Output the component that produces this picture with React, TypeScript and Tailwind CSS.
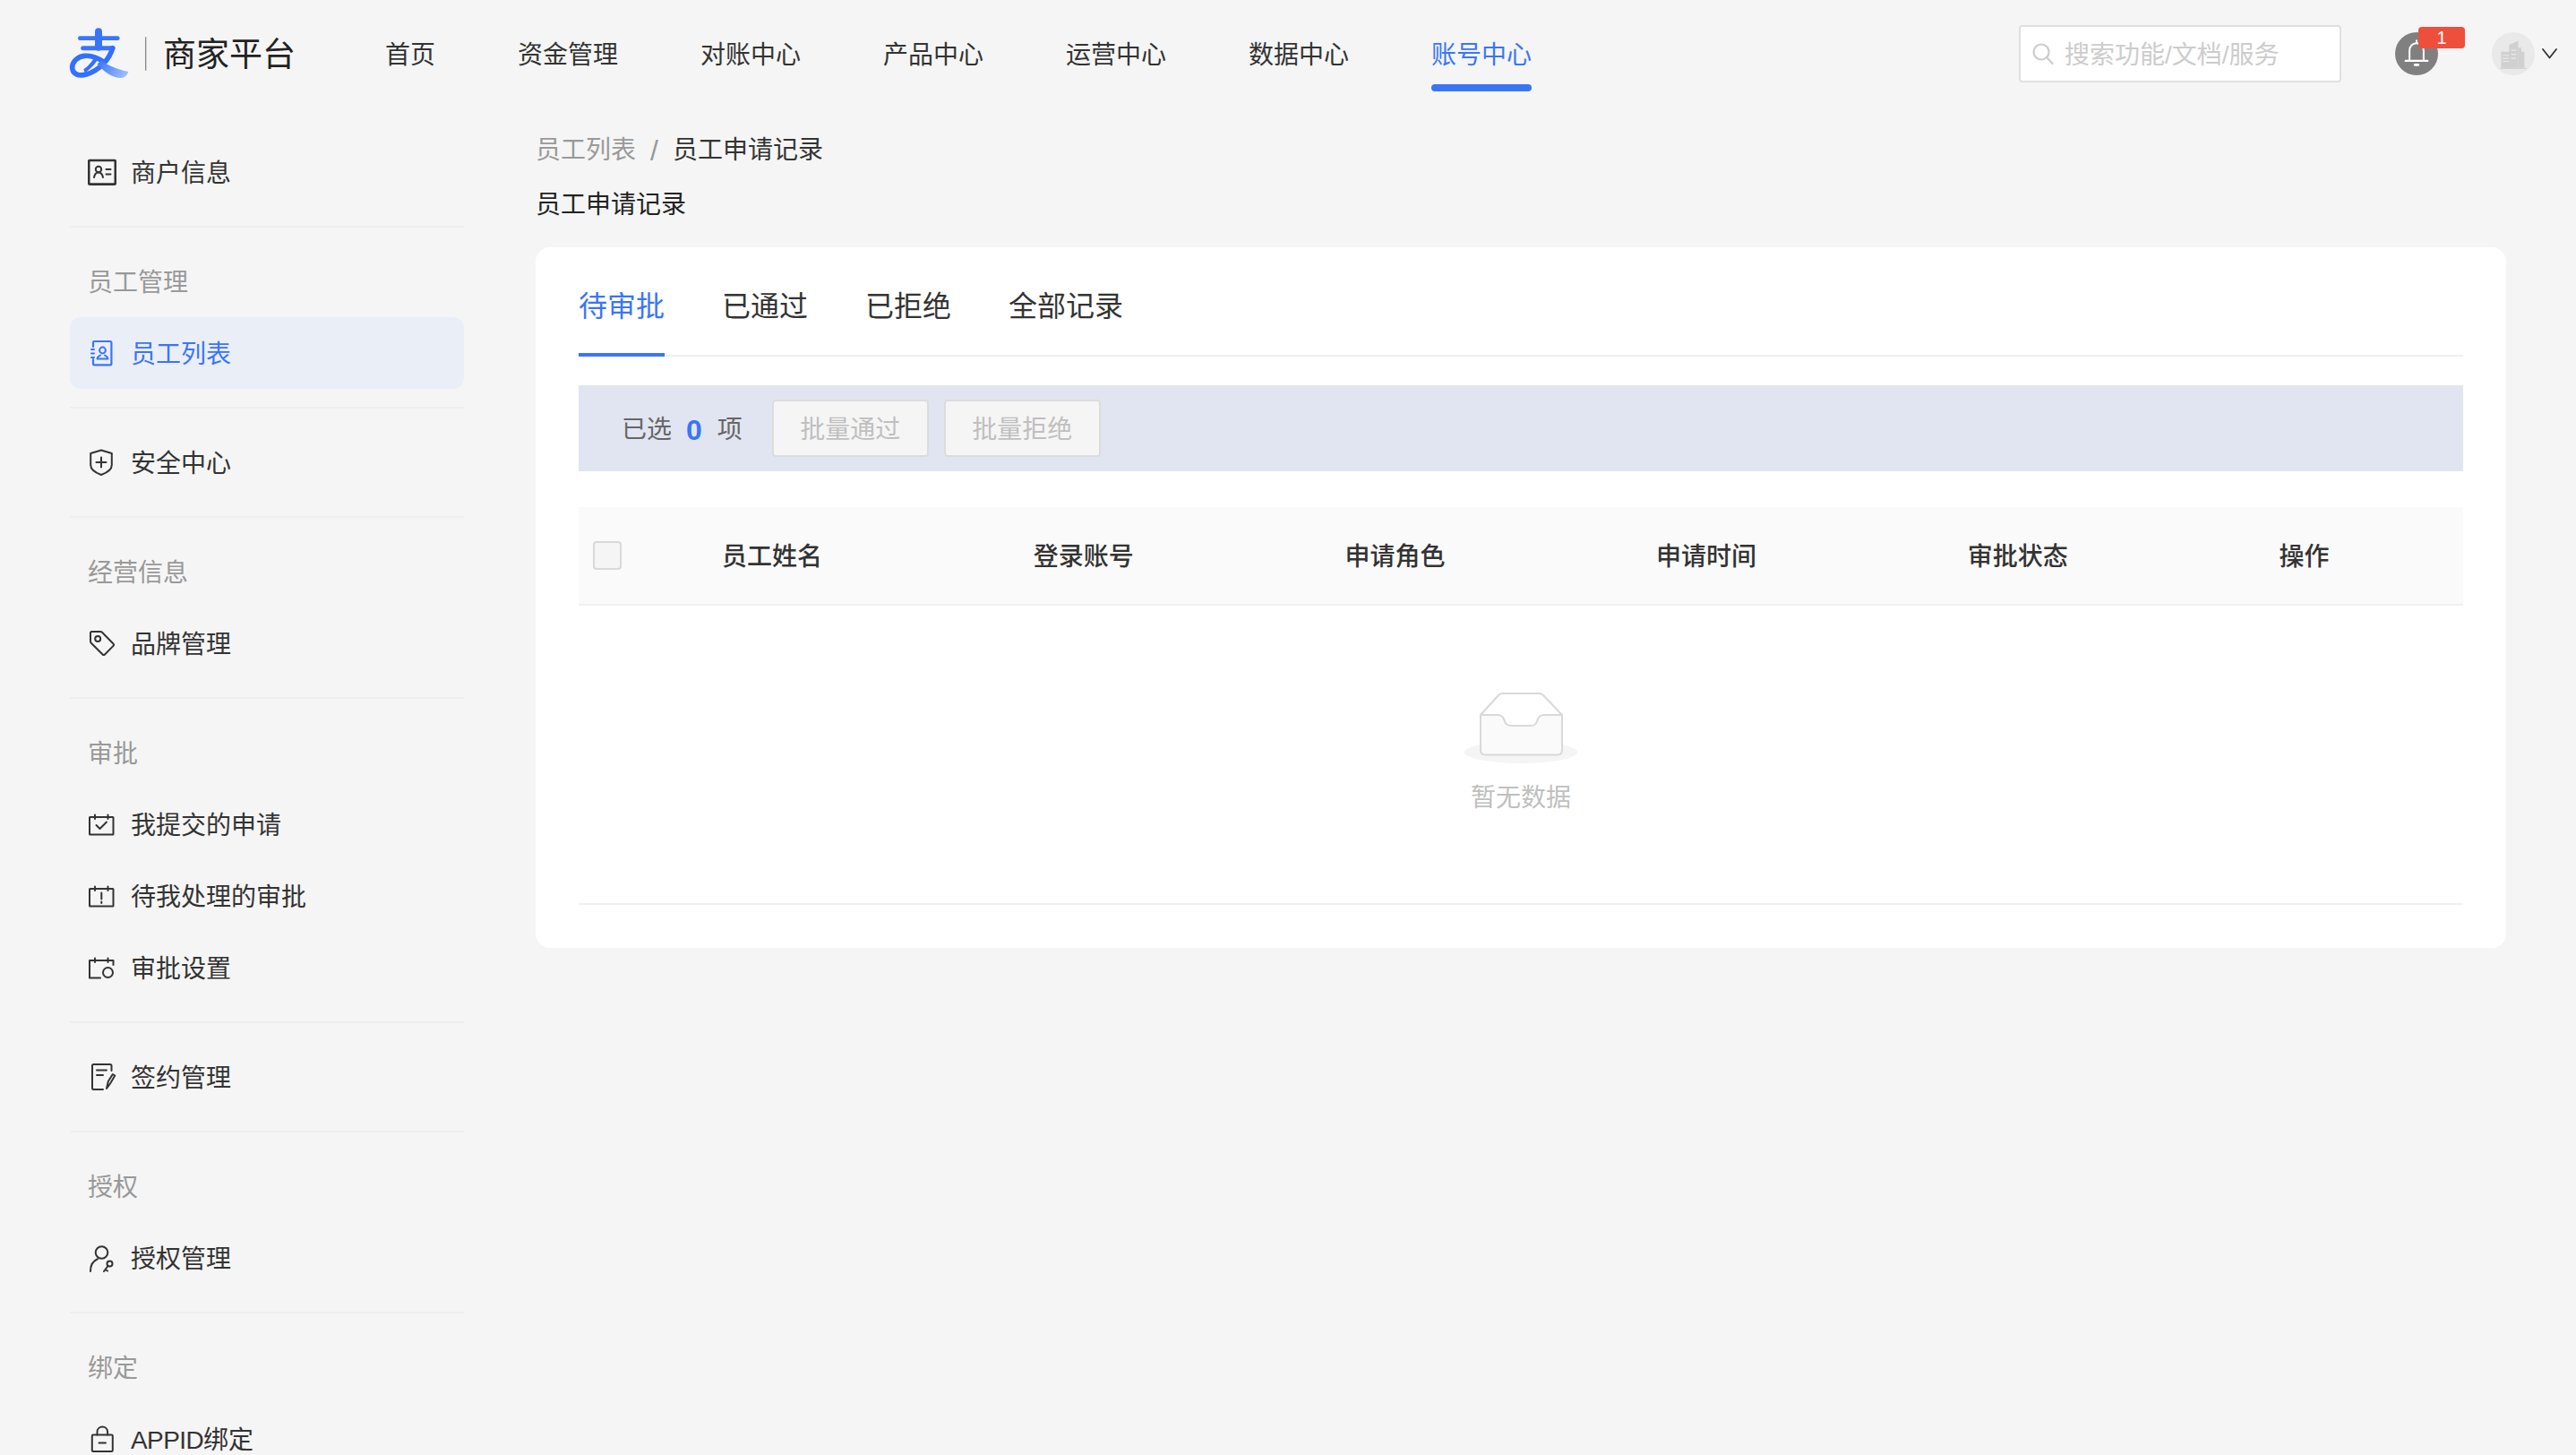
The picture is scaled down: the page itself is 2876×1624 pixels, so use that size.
import React from "react";

const S = { fill: "none", stroke: "currentColor", strokeWidth: 2, strokeLinecap: "round" as const, strokeLinejoin: "round" as const };

function Ico({ children }: { children: React.ReactNode }) {
  return (
    <svg viewBox="0 0 32 32" className="w-8 h-8 shrink-0" {...S}>
      {children}
    </svg>
  );
}

const icons: Record<string, React.ReactNode> = {
  merchant: (
    <Ico>
      <rect x="1.2" y="3" width="29.6" height="26.6" rx="1" strokeWidth="2.6" />
      <circle cx="12" cy="13" r="3.2" />
      <path d="M7 22c.6-3.6 2.6-5.6 5-5.6s4.4 2 5 5.6" />
      <path d="M20.5 13h5M20.5 18.5h5" />
    </Ico>
  ),
  list: (
    <Ico>
      <path d="M6 9V4.2Q6 3 7.2 3H25q1.4 0 1.4 1.4V28q0 1.4-1.4 1.4H7.2Q6 29.4 6 28v-5" strokeWidth="2.2" />
      <path d="M4 12h3M4 16.5h3M4 21h3" strokeWidth="2" />
      <circle cx="16.5" cy="13" r="3.4" />
      <path d="M10.5 22.5c0-2.5 2-3 3.5-4M22.5 22.5c0-2.5-2-3-3.5-4M10.5 22.5h12" />
    </Ico>
  ),
  shield: (
    <Ico>
      <path d="M15 2.5 26.8 6v13c0 5-5 8.500-11.800 11C8.200 27.500 3.200 24 3.200 19V6Z" />
      <path d="M15 10.500v11M9.500 16h11" />
    </Ico>
  ),
  tag: (
    <Ico>
      <path d="M3 4.500Q3 3 4.500 3h9.500q1.200 0 2 .8l12.500 12.700q1.200 1.200 0 2.400L19 28.500q-1.200 1.200-2.400 0L3.800 15.700Q3 15 3 13.800Z" />
      <circle cx="11.200" cy="11" r="3" />
    </Ico>
  ),
  check: (
    <Ico>
      <rect x="2" y="8" width="26.500" height="19.500" rx=".5" />
      <path d="M8 5.500v4.500M22.500 5.500v4.500" />
      <path d="m9.500 17 4 4 7.500-7.500" />
    </Ico>
  ),
  pending: (
    <Ico>
      <rect x="2" y="8" width="26.500" height="19.500" rx=".5" />
      <path d="M8 5.500v4.500M22.500 5.500v4.500" />
      <path d="M15.300 12.500v7M15.300 22.500v1.500" />
    </Ico>
  ),
  settings: (
    <Ico>
      <path d="M14 27.500H2V8h26.500v5" />
      <path d="M8 5.500v4.500M22.500 5.500v4.500" />
      <circle cx="22.500" cy="21.500" r="5.500" />
    </Ico>
  ),
  contract: (
    <Ico>
      <path d="M26.500 9V3.500q0-1.500-1.500-1.500H6.500Q5 2 5 3.500v25Q5 30 6.500 30H17" />
      <path d="M10 8.500h11M10 14h7" />
      <path d="m21 29 1.800-8 5-8 2.500 1.500-5 8.500Z" />
    </Ico>
  ),
  auth: (
    <Ico>
      <circle cx="15.500" cy="10" r="6.800" />
      <path d="M3 31c0-7.500 3.500-12 8-13.800" />
      <circle cx="24.500" cy="22.500" r="3" />
      <path d="m22.500 25-4.500 6M19.500 29l2.500 1.500" />
    </Ico>
  ),
  lock: (
    <Ico>
      <rect x="4.800" y="11.500" width="23" height="18.500" rx="1.200" />
      <path d="M10.500 11.500V8.500c0-3.500 2.500-6 5.800-6s5.800 2.500 5.800 6v3" />
      <path d="M12.500 20.500h7.500" />
    </Ico>
  ),
};

function Sep() {
  return <div className="h-0.5 bg-[#eeeeee] my-5" />;
}

function Label({ children }: { children: React.ReactNode }) {
  return <div className="h-20 flex items-center pl-5 pt-[3px] text-[28px] text-[#999999]">{children}</div>;
}

function Item({ icon, text, active, latin }: { icon: string; text: string; active?: boolean; latin?: string }) {
  return (
    <div
      className={
        active
          ? "h-20 flex items-center gap-4 pl-5 rounded-xl bg-[#eaeef7] text-[#3a75f8] text-[28px]"
          : "h-20 flex items-center gap-4 pl-5 text-[#333333] text-[28px]"
      }
    >
      {icons[icon]}
      <span className="pt-[3px]">
        {latin ? <span className="tracking-[-0.6px]">{latin}</span> : null}
        {text}
      </span>
    </div>
  );
}

function NavItem({ text, active }: { text: string; active?: boolean }) {
  return (
    <div className={active ? "flex flex-col pt-[42px] text-[#3a75f8]" : "flex flex-col pt-[42px] text-[#333333]"}>
      <span className="h-10 leading-10 text-[28px]">{text}</span>
      {active ? <span className="mt-3 h-2 rounded-full bg-[#3a75f8]" /> : null}
    </div>
  );
}

function Logo() {
  return (
    <svg viewBox="0 0 366 240" className="w-[122px] h-20 shrink-0" fill="none">
      <defs>
        <linearGradient id="tail" x1="150" y1="130" x2="255" y2="190" gradientUnits="userSpaceOnUse">
          <stop offset="0" stopColor="#3370ff" />
          <stop offset="1" stopColor="#a9c5fb" />
        </linearGradient>
      </defs>
      <path d="M88 68h126" stroke="#3a75f8" strokeWidth="14" strokeLinecap="round" />
      <path d="M150 46v52" stroke="#3a75f8" strokeWidth="24" strokeLinecap="round" />
      <path d="M98 101h100" stroke="#3a75f8" strokeWidth="15" strokeLinecap="round" />
      <path d="M197 101c-10 36-42 74-88 88-26 8-46-2-47-22-1-20 18-38 42-40 24-2 46 8 66 22" stroke="#3370ff" strokeWidth="17" strokeLinecap="round" />
      <path d="M150 136c-10 16-24 34-46 48l-4-12c16-10 28-26 38-42Z" fill="#3370ff" />
      <path d="M158 142c28 20 54 30 92 38-4 12-12 22-28 21-32-3-56-24-76-46Z" fill="url(#tail)" />
      <path d="M308 64v112" stroke="#8a8a8a" strokeWidth="4" />
    </svg>
  );
}

function Empty() {
  return (
    <svg viewBox="0 0 126 80" className="w-[126px] h-20" fill="none">
      <ellipse cx="63" cy="66.500" rx="63" ry="12.500" fill="#f5f5f5" />
      <path d="M18 25 38 3q2-2 5-2h40q3 0 5 2l21 22" fill="#ffffff" stroke="#d9d9d9" strokeWidth="2" />
      <path
        d="M18 25h19q6 0 7.500 6 1.500 6 7.500 6h22q6 0 7.500-6 1.500-6 7.500-6h20v39q0 5.500-5.500 5.500h-80Q18 69.500 18 64Z"
        fill="#fafafa"
        stroke="#d9d9d9"
        strokeWidth="2"
      />
    </svg>
  );
}

export default function App() {
  const cols = ["员工姓名", "登录账号", "申请角色", "申请时间", "审批状态", "操作"];
  return (
    <div className="w-[2876px] h-[1624px] overflow-hidden bg-[#f5f5f5] font-['Liberation_Sans','Noto_Sans_CJK_SC',sans-serif] text-[#333333]">
      <header className="h-[120px] flex items-start pl-[60px] pr-[21px]">
        <div className="flex items-center pt-5">
          <Logo />
          <span className="text-[37px] leading-10 pt-1 text-[#222222]">商家平台</span>
        </div>
        <nav className="flex gap-[92px] ml-[100px]">
          <NavItem text="首页" />
          <NavItem text="资金管理" />
          <NavItem text="对账中心" />
          <NavItem text="产品中心" />
          <NavItem text="运营中心" />
          <NavItem text="数据中心" />
          <NavItem text="账号中心" active />
        </nav>
        <div className="ml-auto mt-7 flex items-center gap-2 w-[360px] h-16 pl-[13px] bg-white border-2 border-[#e0e0e0] rounded">
          <svg viewBox="0 0 24 24" className="w-6 h-6 shrink-0" fill="none" stroke="#cccccc" strokeWidth="2.200" strokeLinecap="round">
            <circle cx="10" cy="10" r="8.500" />
            <path d="m16 16 6.500 7" />
          </svg>
          <span className="ml-1 pt-[3px] text-[28px] text-[#cccccc]">搜索功能/文档/服务</span>
        </div>
        <div className="relative ml-[60px] mt-9 w-12 h-12 rounded-full bg-[#808080] flex items-center justify-center">
          <svg viewBox="0 0 32 32" className="w-9 h-9" fill="none" stroke="#ffffff" strokeWidth="1.800" strokeLinecap="round" strokeLinejoin="round">
            <path d="M16 3v2M9 22V13c0-4.500 3-7.500 7-7.500s7 3 7 7.500v9M5 23h22" />
            <path d="M14.500 27h3" strokeWidth="2.500" />
          </svg>
          <span className="absolute left-[26px] top-[-6px] w-[52px] h-6 rounded bg-[#ee4f3d] text-white text-[20px] leading-6 text-center">1</span>
        </div>
        <div className="ml-[60px] mt-9 w-12 h-12 rounded-full bg-[#e9e9e9] flex items-center justify-center">
          <svg viewBox="0 0 32 32" className="w-9 h-9" fill="#d0d0d0">
            <rect x="4" y="14" width="9" height="16" />
            <path d="M12 7l9-4v27h-9Z" />
            <path d="M21 10h3v4h3v16h-6Z" />
            <rect x="3" y="30" width="26" height="1" />
            <path d="M5.500 17h6v1h-6zM5.500 20h6v1h-6zM5.500 23h6v1h-6zM14 12h5v1h-5zM14 16h5v1h-5zM14 20h5v1h-5z" fill="#e9e9e9" />
          </svg>
        </div>
        <svg viewBox="0 0 17 12" className="ml-2 mt-[54px] w-[17px] h-3" fill="none" stroke="#333333" strokeWidth="1.800" strokeLinecap="round" strokeLinejoin="round">
          <path d="m1 1 7.500 9.500L16 1" />
        </svg>
      </header>

      <div className="flex pl-[78px]">
        <aside className="w-[440px] shrink-0 pt-8">
          <Item icon="merchant" text="商户信息" />
          <Sep />
          <Label>员工管理</Label>
          <Item icon="list" text="员工列表" active />
          <Sep />
          <Item icon="shield" text="安全中心" />
          <Sep />
          <Label>经营信息</Label>
          <Item icon="tag" text="品牌管理" />
          <Sep />
          <Label>审批</Label>
          <Item icon="check" text="我提交的申请" />
          <Item icon="pending" text="待我处理的审批" />
          <Item icon="settings" text="审批设置" />
          <Sep />
          <Item icon="contract" text="签约管理" />
          <Sep />
          <Label>授权</Label>
          <Item icon="auth" text="授权管理" />
          <Sep />
          <Label>绑定</Label>
          <Item icon="lock" latin="APPID" text="绑定" />
        </aside>

        <main className="ml-20 w-[2200px] pt-[27px]">
          <div className="flex items-center h-10 pt-px text-[28px]">
            <span className="text-[#999999]">员工列表</span>
            <span className="mx-4 text-[32px] leading-10 text-[#999999]">/</span>
            <span className="text-[#333333]">员工申请记录</span>
          </div>
          <div className="mt-[21px] h-10 leading-10 pt-px text-[28px] text-[#222222]">员工申请记录</div>

          <section className="mt-7 h-[782px] bg-white rounded-2xl px-12">
            <div className="h-[122px] flex gap-16 border-b-2 border-[#f0f0f0]">
              <div className="relative pt-12 text-[32px] leading-9 text-[#3a75f8]">
                待审批
                <span className="absolute left-0 right-0 bottom-[-2px] h-1 bg-[#3a75f8]" />
              </div>
              <div className="pt-12 text-[32px] leading-9">已通过</div>
              <div className="pt-12 text-[32px] leading-9">已拒绝</div>
              <div className="pt-12 text-[32px] leading-9">全部记录</div>
            </div>

            <div className="mt-8 h-24 flex items-center pl-12 bg-[#e1e5f1] text-[28px] text-[#666666]">
              <span className="pt-[3px]">已选</span>
              <span className="ml-4 pt-[3px] text-[32px] font-bold text-[#3a75f8]">0</span>
              <span className="ml-[17px] pt-[3px]">项</span>
              <button className="ml-[33px] w-[175px] h-16 pt-[3px] bg-[#f5f5f5] border-2 border-[#dcdcdc] rounded text-[#bfbfbf]">批量通过</button>
              <button className="ml-[17px] w-[175px] h-16 pt-[3px] bg-[#f5f5f5] border-2 border-[#dcdcdc] rounded text-[#bfbfbf]">批量拒绝</button>
            </div>

            <div className="mt-10 h-[110px] grid grid-cols-[160px_repeat(5,347.7px)_1fr] items-center bg-[#fafafa] border-b-2 border-[#f0f0f0] text-[28px] font-medium">
              <span className="ml-4 w-8 h-8 bg-[#f5f5f5] border-2 border-[#d9d9d9] rounded" />
              {cols.map((c) => (
                <span key={c} className="pt-[3px]">{c}</span>
              ))}
            </div>

            <div className="h-[334px] pt-[97px] flex flex-col items-center border-b-2 border-[#f0f0f0]">
              <Empty />
              <span className="mt-[17px] h-10 pt-px leading-10 text-[28px] text-[#bfbfbf]">暂无数据</span>
            </div>
          </section>
        </main>
      </div>
    </div>
  );
}
